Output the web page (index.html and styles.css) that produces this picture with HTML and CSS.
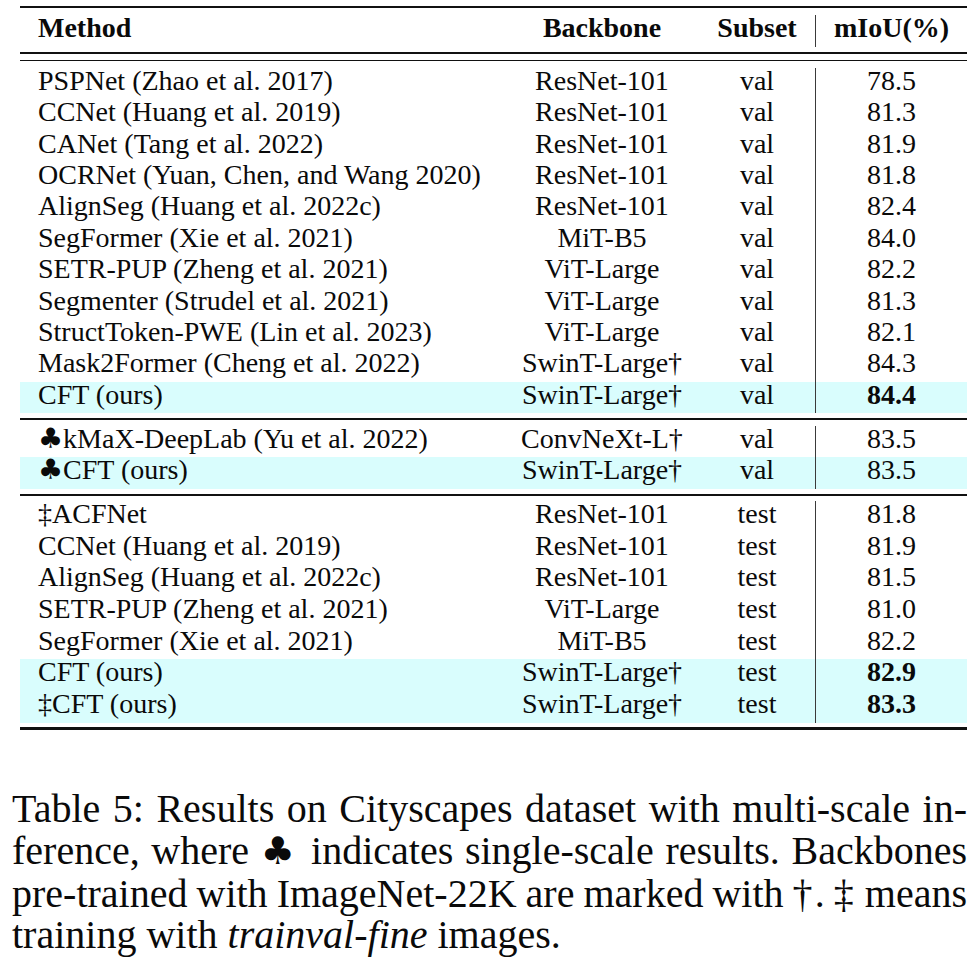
FILE: index.html
```html
<!DOCTYPE html>
<html>
<head>
<meta charset="utf-8">
<link rel="stylesheet" href="styles.css">
</head>
<body>
<div class="page">
  <div class="tbl">
    <div class="rule heavy top"></div>
    <div class="row head">
      <div class="c1">Method</div>
      <div class="c2">Backbone</div>
      <div class="c3">Subset</div>
      <div class="c4">mIoU(%)</div>
    </div>
    <div class="rule thin d1"></div>
    <div class="rule thin d2"></div>

    <div class="group g1">
      <div class="row"><div class="c1">PSPNet (Zhao et al. 2017)</div><div class="c2">ResNet-101</div><div class="c3">val</div><div class="c4">78.5</div></div>
      <div class="row"><div class="c1">CCNet (Huang et al. 2019)</div><div class="c2">ResNet-101</div><div class="c3">val</div><div class="c4">81.3</div></div>
      <div class="row"><div class="c1">CANet (Tang et al. 2022)</div><div class="c2">ResNet-101</div><div class="c3">val</div><div class="c4">81.9</div></div>
      <div class="row"><div class="c1">OCRNet (Yuan, Chen, and Wang 2020)</div><div class="c2">ResNet-101</div><div class="c3">val</div><div class="c4">81.8</div></div>
      <div class="row"><div class="c1">AlignSeg (Huang et al. 2022c)</div><div class="c2">ResNet-101</div><div class="c3">val</div><div class="c4">82.4</div></div>
      <div class="row"><div class="c1">SegFormer (Xie et al. 2021)</div><div class="c2">MiT-B5</div><div class="c3">val</div><div class="c4">84.0</div></div>
      <div class="row"><div class="c1">SETR-PUP (Zheng et al. 2021)</div><div class="c2">ViT-Large</div><div class="c3">val</div><div class="c4">82.2</div></div>
      <div class="row"><div class="c1">Segmenter (Strudel et al. 2021)</div><div class="c2">ViT-Large</div><div class="c3">val</div><div class="c4">81.3</div></div>
      <div class="row"><div class="c1">StructToken-PWE (Lin et al. 2023)</div><div class="c2">ViT-Large</div><div class="c3">val</div><div class="c4">82.1</div></div>
      <div class="row"><div class="c1">Mask2Former (Cheng et al. 2022)</div><div class="c2">SwinT-Large†</div><div class="c3">val</div><div class="c4">84.3</div></div>
      <div class="row ours"><div class="c1">CFT (ours)</div><div class="c2">SwinT-Large†</div><div class="c3">val</div><div class="c4 best">84.4</div></div>
    </div>
    <div class="rule mid m1"></div>

    <div class="group g2">
      <div class="row"><div class="c1"><span class="club">♣</span>kMaX-DeepLab (Yu et al. 2022)</div><div class="c2">ConvNeXt-L†</div><div class="c3">val</div><div class="c4">83.5</div></div>
      <div class="row ours"><div class="c1"><span class="club">♣</span>CFT (ours)</div><div class="c2">SwinT-Large†</div><div class="c3">val</div><div class="c4">83.5</div></div>
    </div>
    <div class="rule mid m2"></div>

    <div class="group g3">
      <div class="row"><div class="c1">‡ACFNet</div><div class="c2">ResNet-101</div><div class="c3">test</div><div class="c4">81.8</div></div>
      <div class="row"><div class="c1">CCNet (Huang et al. 2019)</div><div class="c2">ResNet-101</div><div class="c3">test</div><div class="c4">81.9</div></div>
      <div class="row"><div class="c1">AlignSeg (Huang et al. 2022c)</div><div class="c2">ResNet-101</div><div class="c3">test</div><div class="c4">81.5</div></div>
      <div class="row"><div class="c1">SETR-PUP (Zheng et al. 2021)</div><div class="c2">ViT-Large</div><div class="c3">test</div><div class="c4">81.0</div></div>
      <div class="row"><div class="c1">SegFormer (Xie et al. 2021)</div><div class="c2">MiT-B5</div><div class="c3">test</div><div class="c4">82.2</div></div>
      <div class="row ours"><div class="c1">CFT (ours)</div><div class="c2">SwinT-Large†</div><div class="c3">test</div><div class="c4 best">82.9</div></div>
      <div class="row ours"><div class="c1">‡CFT (ours)</div><div class="c2">SwinT-Large†</div><div class="c3">test</div><div class="c4 best">83.3</div></div>
    </div>
    <div class="rule heavy bottom"></div>
  </div>

  <div class="caption">
    <div class="line just">Table 5: Results on Cityscapes dataset with multi-scale in-</div>
    <div class="line just">ference, where <span class="club">♣</span> indicates single-scale results. Backbones</div>
    <div class="line just">pre-trained with ImageNet-22K are marked with †. ‡ means</div>
    <div class="line">training with <i>trainval-fine</i> images.</div>
  </div>
</div>
</body>
</html>
```

FILE: styles.css
```css
html, body {
  margin: 0;
  padding: 0;
  background: #ffffff;
}

body {
  font-family: "Liberation Serif", "Times New Roman", Times, Tinos, "Nimbus Roman", "DejaVu Serif", serif;
  color: #0a0a0a;
}

.page {
  width: 980px;
  height: 969px;
  overflow: hidden;
}

.tbl {
  margin-left: 20px;
  width: 947px;
  padding-top: 6px;
}

.rule {
  background: #111;
}

.rule.heavy.top {
  height: 2px;
}

.rule.thin {
  height: 1.5px;
}

.rule.d1 {
  margin-top: 5px;
}

.rule.d2 {
  margin-top: 6px;
}

.rule.mid {
  height: 1.8px;
  margin-top: 5px;
}

.rule.m2 {
  margin-top: 5.5px;
}

.rule.heavy.bottom {
  height: 3px;
  margin-top: 4.5px;
}

.row {
  display: grid;
  grid-template-columns: 485px 194px 116px 152px;
  height: var(--rh, 31.4px);
  font-size: 28px;
  line-height: 25px;
}

.row > div {
  white-space: nowrap;
}

.c1 {
  padding-left: 18px;
}

.c2,
.c3,
.c4 {
  text-align: center;
}

.c4 {
  border-left: 1px solid #3a3a3a;
}

.head {
  margin-top: 7px;
  height: 32px;
  font-weight: bold;
}

.group.g1 {
  margin-top: 7px;
  --rh: 31.36px;
}

.group.g2 {
  margin-top: 6px;
  --rh: 31.5px;
}

.group.g3 {
  margin-top: 5px;
  --rh: 31.7px;
}

.ours {
  background: #d9fdfd;
}

.best {
  font-weight: bold;
}

.club {
  font-family: "DejaVu Sans", sans-serif;
  font-size: 1em;
}

.caption {
  margin-top: 58px;
  margin-left: 12px;
  width: 955px;
  font-size: 40px;
  line-height: 41.7px;
}

.caption .club {
  font-size: 0.95em;
}

.line {
  white-space: nowrap;
}

.line.just {
  text-align: justify;
  text-align-last: justify;
  white-space: nowrap;
  word-spacing: -3px;
}

.caption i {
  font-style: italic;
}
```
